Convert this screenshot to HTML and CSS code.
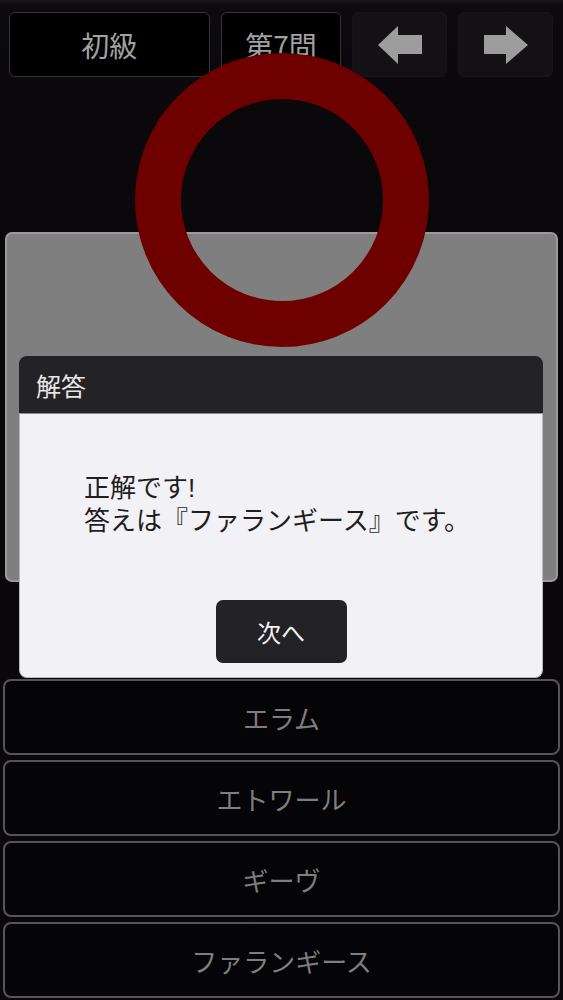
FILE: index.html
```html
<!DOCTYPE html>
<html lang="ja">
<head>
<meta charset="utf-8">
<title>クイズ</title>
<link rel="stylesheet" href="styles.css">
</head>
<body>
<div class="screen">
  <div class="topbar">
    <div class="tb level">初級</div>
    <div class="tb qnum">第7問</div>
    <div class="tb arrow">
      <svg width="44" height="38" viewBox="0 0 44 38"><polygon points="0,19 20,0 20,9 44,9 44,28 20,28 20,38" fill="#9d9d9d"/></svg>
    </div>
    <div class="tb arrow">
      <svg width="44" height="38" viewBox="0 0 44 38"><polygon points="44,19 22,0 22,9 0,9 0,28 22,28 22,38" fill="#9d9d9d"/></svg>
    </div>
  </div>

  <div class="card"></div>

  <div class="answers">
    <div class="answer">エラム</div>
    <div class="answer">エトワール</div>
    <div class="answer">ギーヴ</div>
    <div class="answer">ファランギース</div>
  </div>

  <div class="mark"></div>

  <div class="dialog">
    <div class="dialog-head">解答</div>
    <div class="dialog-body">
      <p class="dialog-text">正解です!<br>答えは『ファランギース』です。</p>
      <div class="dialog-actions">
        <div class="next-btn">次へ</div>
      </div>
    </div>
  </div>
</div>
</body>
</html>
```

FILE: styles.css
```css
html, body {
  margin: 0;
  padding: 0;
}

body {
  width: 563px;
  height: 1000px;
  overflow: hidden;
  background: #0a070a;
  font-family: "Noto Sans CJK JP", "Noto Sans", sans-serif;
  text-spacing-trim: space-all;
}

.screen {
  position: relative;
  width: 563px;
  height: 1000px;
  background: linear-gradient(#19141f 0, #0c0a0e 5px, #0a080b 120px, #0a070a 100%);
}

.topbar {
  display: flex;
  gap: 11px;
  padding: 12px 10px 0 9px;
  height: 65px;
}

.tb {
  box-sizing: border-box;
  height: 65px;
  display: flex;
  align-items: center;
  justify-content: center;
  border-radius: 6px;
}

.level, .qnum {
  background: #000;
  border: 1px solid #363438;
  color: #a2a2a2;
  font-size: 28px;
}

.level { width: 201px; }
.qnum { width: 121px; }

.arrow {
  width: 95px;
  background: #131114;
  border: 1px solid #17151a;
}

.card {
  box-sizing: border-box;
  margin: 155px 5px 0 5px;
  height: 350px;
  background: #7f7f7f;
  border: 2px solid #9a9a9a;
  border-radius: 7px;
}

.answers {
  margin: 97px 3px 0 3px;
  display: flex;
  flex-direction: column;
  gap: 5px;
}

.answer {
  box-sizing: border-box;
  height: 76px;
  border: 2px solid #555457;
  border-radius: 8px;
  background: #050406;
  color: #7e7e7e;
  font-size: 26px;
  display: flex;
  align-items: center;
  justify-content: center;
}

.mark {
  position: absolute;
  left: 135px;
  top: 53px;
  width: 294px;
  height: 294px;
  box-sizing: border-box;
  border: 46px solid #6e0000;
  border-radius: 50%;
}

.dialog {
  position: absolute;
  left: 19px;
  top: 356px;
  width: 524px;
}

.dialog-head {
  height: 57px;
  background: #232224;
  border-radius: 8px 8px 0 0;
  color: #e6e6e6;
  font-size: 25px;
  display: flex;
  align-items: center;
  padding-left: 17px;
}

.dialog-body {
  background: #f2f1f5;
  border: 1px solid #b9b8bc;
  border-top-color: #8d8c90;
  border-radius: 0 0 8px 8px;
  padding: 58px 0 14px 0;
}

.dialog-text {
  margin: 0 0 0 64px;
  font-family: "Liberation Sans", "Noto Sans CJK JP", sans-serif;
  font-size: 26px;
  line-height: 33px;
  color: #1e1e1e;
}

.dialog-actions {
  display: flex;
  justify-content: center;
  margin-top: 62px;
}

.next-btn {
  width: 131px;
  height: 63px;
  background: #232224;
  border-radius: 7px;
  color: #f2f2f2;
  font-size: 24px;
  display: flex;
  align-items: center;
  justify-content: center;
}
```
